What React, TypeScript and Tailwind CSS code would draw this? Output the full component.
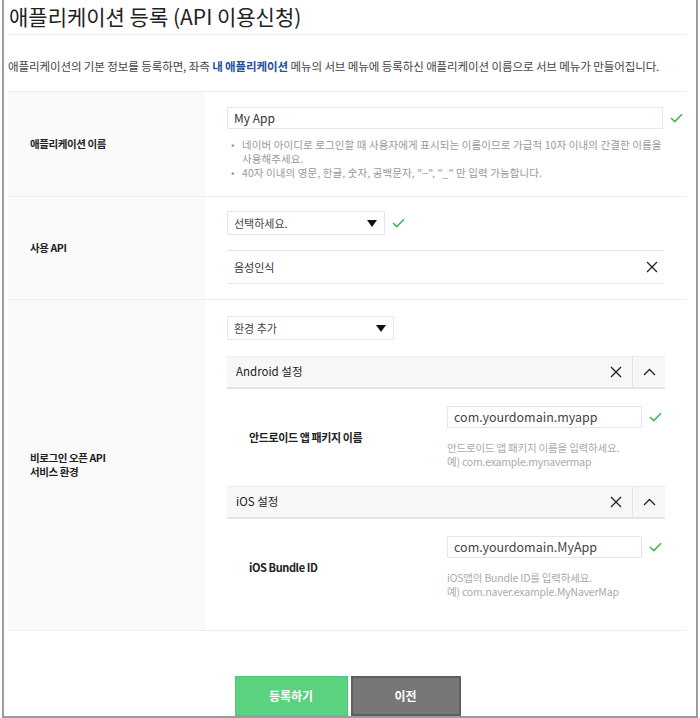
import React from "react"

const font = { fontFamily: '"Noto Sans CJK KR", "Noto Sans", sans-serif' }

function Check({ className = "" }: { className?: string }) {
  return (
    <svg width="13" height="10" viewBox="0 0 13 10" className={className}>
      <polyline points="1,5 4.8,8.6 12,1.2" fill="none" stroke="#3cb55a" strokeWidth="1.5" />
    </svg>
  )
}

function Close() {
  return (
    <svg width="12" height="12" viewBox="0 0 12 12">
      <path d="M1 1 L11 11 M11 1 L1 11" stroke="#222" strokeWidth="1.3" fill="none" />
    </svg>
  )
}

function ChevronUp() {
  return (
    <svg width="13" height="8" viewBox="0 0 13 8">
      <polyline points="1,7 6.5,1.5 12,7" fill="none" stroke="#222" strokeWidth="1.3" />
    </svg>
  )
}

function Arrow() {
  return (
    <svg width="10" height="7" viewBox="0 0 10 7">
      <polygon points="0,0 10,0 5,7" fill="#111" />
    </svg>
  )
}

function Select({ label, width }: { label: string; width: string }) {
  return (
    <div className={`${width} h-[24px] border border-[#e6e6e6] bg-white flex items-center justify-between pl-[6px] pr-[7px]`}>
      <span className="text-[11px] text-[#444]">{label}</span>
      <Arrow />
    </div>
  )
}

function EnvHeader({ title }: { title: string }) {
  return (
    <div className="h-[33px] flex items-stretch bg-[#f7f7f7] border-t border-[#ececec] border-b-2 border-b-[#e4e4e4]">
      <div className="flex-1 flex items-center pl-[9px] text-[11.5px] text-[#222]">{title}</div>
      <div className="w-[32px] flex items-center justify-center">
        <Close />
      </div>
      <div className="w-[33px] flex items-center justify-center border-l border-[#e4e4e4]">
        <ChevronUp />
      </div>
    </div>
  )
}

function EnvRow({ label, value, help1, help2 }: { label: string; value: string; help1: string; help2: string }) {
  return (
    <div className="flex items-center pt-[17px] pb-[17px]">
      <div className="w-[220px] pl-[22px] text-[11px] font-bold text-[#222] tracking-[-0.4px]">{label}</div>
      <div>
        <div className="flex items-center">
          <div className="w-[195px] h-[22px] border border-[#e6e6e6] flex items-center pl-[6px] text-[12.5px] text-[#444]">
            {value}
          </div>
          <Check className="ml-[7px]" />
        </div>
        <div className="mt-[13px] text-[10.5px] leading-[14px] text-[#aaa] tracking-[-0.2px]">
          <div>{help1}</div>
          <div>{help2}</div>
        </div>
      </div>
    </div>
  )
}

export default function App() {
  return (
    <div className="min-h-screen bg-white" style={font}>
      <div className="ml-[2px] w-[696px] h-[718px] border-l-2 border-r-2 border-b-2 border-[#9c9c9c] pl-[4px] pr-[9px] flex flex-col">
        {/* Title */}
        <div className="h-[36px] flex items-center border-b border-[#eeeeee] pl-[1px]">
          <h1 className="text-[21px] text-[#222] leading-none pb-[1px]">애플리케이션 등록 (API 이용신청)</h1>
        </div>

        {/* Description */}
        <p className="pt-[24px] h-[56px] text-[11.5px] leading-[14px] text-[#444] tracking-[-0.1px] whitespace-nowrap">
          애플리케이션의 기본 정보를 등록하면, 좌측{" "}
          <span className="font-bold text-[#27509b]">내 애플리케이션</span> 메뉴의 서브 메뉴에 등록하신 애플리케이션
          이름으로 서브 메뉴가 만들어집니다.
        </p>

        {/* Form */}
        <div className="border-t border-[#eeeeee]">
          {/* App name */}
          <div className="grid grid-cols-[197px_1fr] border-b border-[#eeeeee]">
            <div className="bg-[#fafafa] flex items-center pl-[22px] text-[10.5px] font-bold text-[#222] tracking-[-0.4px]">
              애플리케이션 이름
            </div>
            <div className="pl-[22px] pt-[15px] pb-[16px]">
              <div className="flex items-center">
                <div className="w-[436px] h-[22px] border border-[#e6e6e6] flex items-center pl-[6px] text-[12px] text-[#333]">
                  My App
                </div>
                <Check className="ml-[7px]" />
              </div>
              <ul className="mt-[9px] text-[10.5px] leading-[14px] text-[#999] tracking-[0.1px]">
                <li className="flex">
                  <div className="w-[15px] pl-[4px]">•</div>
                  <div className="whitespace-nowrap">
                    <div>네이버 아이디로 로그인할 때 사용자에게 표시되는 이름이므로 가급적 10자 이내의 간결한 이름을</div>
                    <div>사용해주세요.</div>
                  </div>
                </li>
                <li className="flex">
                  <div className="w-[15px] pl-[4px]">•</div>
                  <div className="whitespace-nowrap">40자 이내의 영문, 한글, 숫자, 공백문자, "−", "_" 만 입력 가능합니다.</div>
                </li>
              </ul>
            </div>
          </div>

          {/* API */}
          <div className="grid grid-cols-[197px_1fr] border-b border-[#eeeeee]">
            <div className="bg-[#fafafa] flex items-center pl-[22px] text-[10.5px] font-bold text-[#222] tracking-[-0.4px]">
              사용 API
            </div>
            <div className="pl-[22px] pt-[14px] pb-[15px]">
              <div className="flex items-center">
                <Select label="선택하세요." width="w-[158px]" />
                <Check className="ml-[7px]" />
              </div>
              <div className="mt-[15px] w-[437px] h-[34px] border-t border-b border-[#e6e6e6] flex items-center justify-between pl-[7px] pr-[6px]">
                <span className="text-[11px] text-[#333]">음성인식</span>
                <Close />
              </div>
            </div>
          </div>

          {/* Environments */}
          <div className="grid grid-cols-[197px_1fr] border-b border-[#eeeeee]">
            <div className="bg-[#fafafa] flex items-center pl-[22px] text-[10.5px] font-bold text-[#222] leading-[14px] tracking-[-0.4px]">
              <div>
                <div>비로그인 오픈 API</div>
                <div>서비스 환경</div>
              </div>
            </div>
            <div className="pl-[22px] pt-[16px] pb-[14px]">
              <Select label="환경 추가" width="w-[167px]" />
              <div className="mt-[16px] w-[438px]">
                <EnvHeader title="Android 설정" />
                <EnvRow
                  label="안드로이드 앱 패키지 이름"
                  value="com.yourdomain.myapp"
                  help1="안드로이드 앱 패키지 이름을 입력하세요."
                  help2="예) com.example.mynavermap"
                />
                <EnvHeader title="iOS 설정" />
                <EnvRow
                  label="iOS Bundle ID"
                  value="com.yourdomain.MyApp"
                  help1="iOS앱의 Bundle ID를 입력하세요."
                  help2="예) com.naver.example.MyNaverMap"
                />
              </div>
            </div>
          </div>
        </div>

        {/* Buttons */}
        <div className="mt-[45px] flex justify-center gap-[3px]">
          <button className="w-[113px] h-[40px] bg-[#5bd27f] border border-[#4fc873] text-white text-[12px] font-bold">
            등록하기
          </button>
          <button className="w-[110px] h-[40px] bg-[#777777] border-2 border-[#5e5e5e] text-white text-[12px] font-bold">
            이전
          </button>
        </div>
      </div>
    </div>
  )
}
